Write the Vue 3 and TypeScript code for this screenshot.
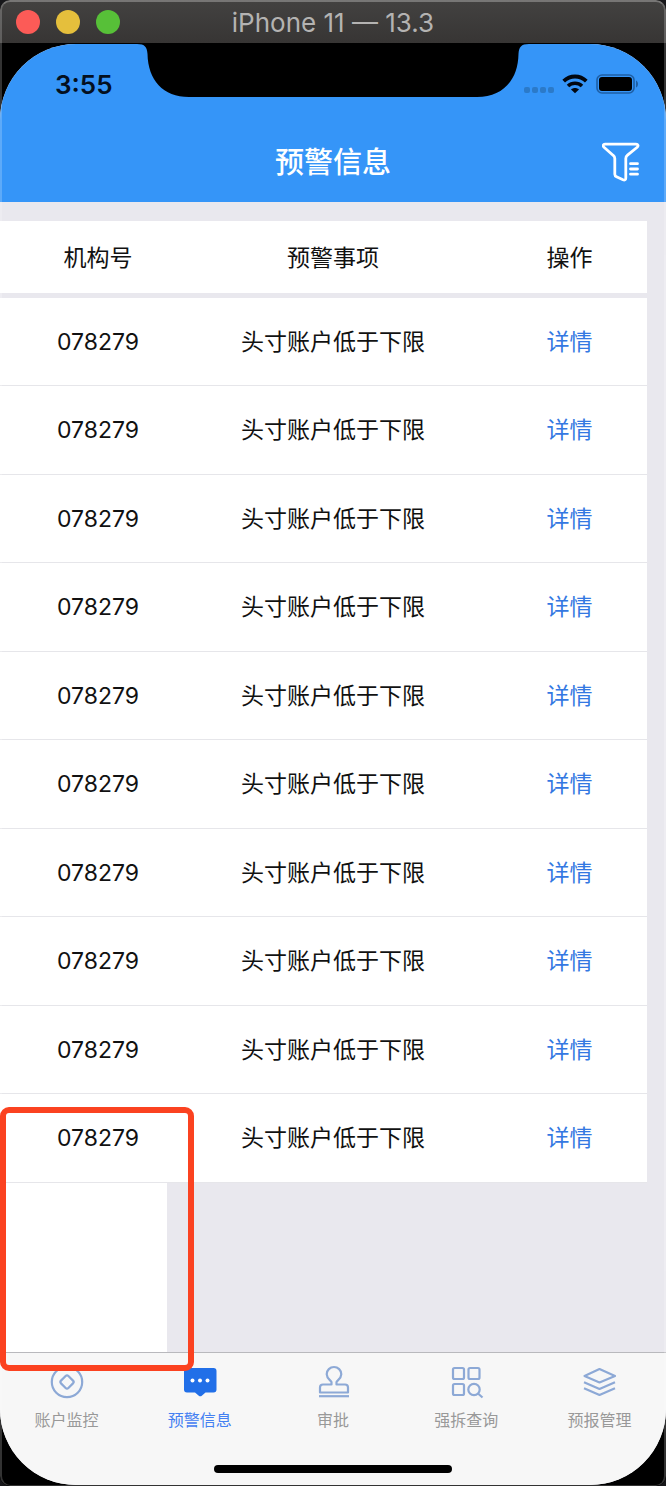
<script setup lang="ts">
import { ref } from 'vue'

interface Alert {
  id: number
  org: string
  item: string
}

type IconName = 'account' | 'alert' | 'stamp' | 'query' | 'layers'

interface Tab {
  label: string
  icon: IconName
}

const alerts: Alert[] = Array.from({ length: 10 }, (_, i) => ({
  id: i + 1,
  org: '078279',
  item: '头寸账户低于下限',
}))

const tabs: Tab[] = [
  { label: '账户监控', icon: 'account' },
  { label: '预警信息', icon: 'alert' },
  { label: '审批', icon: 'stamp' },
  { label: '强拆查询', icon: 'query' },
  { label: '预报管理', icon: 'layers' },
]

const activeTab = ref('预警信息')
</script>

<template>
  <div class="window">
    <div class="titlebar">
      <div class="lights">
        <button class="light close" type="button" aria-label="Close"></button>
        <button class="light minimize" type="button" aria-label="Minimize"></button>
        <button class="light zoom" type="button" aria-label="Zoom"></button>
      </div>
      <div class="window-title">iPhone 11 — 13.3</div>
    </div>

    <div class="bezel">
      <div class="screen">
        <header class="header">
          <svg class="notch" viewBox="0 0 392 53" width="392" height="53" aria-hidden="true">
            <path d="M0 0C8 0 10 3 10.500 10C11 36 26 53 52 53H340C366 53 381 36 381.500 10C382 3 384 0 392 0Z" />
          </svg>
          <div class="status">
            <span class="time">3:55</span>
            <div class="status-icons">
              <span class="dots"><i></i><i></i><i></i><i></i></span>
              <svg width="26" height="20" viewBox="0 0 26 20" aria-hidden="true">
                <path d="M1.700 7.200C8.200 .9 17.800 .9 24.300 7.200" fill="none" stroke="#020710" stroke-width="3.800" />
                <path d="M6 12C10 8.300 16 8.300 20 12" fill="none" stroke="#020710" stroke-width="3.600" />
                <path d="M13 19.200L9 15.400C11.200 13.400 14.800 13.400 17 15.400Z" fill="#020710" />
              </svg>
              <svg width="43" height="20" viewBox="0 0 43 20" aria-hidden="true">
                <rect x="1" y="1" width="37" height="18" rx="5" fill="none" stroke="#1e5fa5" stroke-width="1.600" />
                <rect x="3" y="3" width="33" height="14" rx="3" fill="#000" />
                <path d="M40 6.500C42.700 7.500 42.700 12.500 40 13.500Z" fill="#1e5fa5" />
              </svg>
            </div>
          </div>
          <div class="navbar">
            <h1>预警信息</h1>
            <button class="filter" type="button" aria-label="筛选">
              <svg width="38" height="40" viewBox="0 0 38 40" fill="none" stroke="#fff" stroke-width="2.800" stroke-linecap="round" stroke-linejoin="round" aria-hidden="true">
                <path d="M3 2.200H34C36.200 2.200 36.600 4 35.200 5.200L25.500 13.200C24 14.400 23.800 15 23.800 16.500V36C23.800 38 22.500 38.400 21 37.800L14.500 34.800C13.200 34.200 12.800 33.500 12.800 32.300V16.500C12.800 15 12.500 14.400 11 13.200L2 5.200C.7 4 1 2.200 3 2.200Z" />
                <path d="M28.500 21.700H35.500M28.500 27H35.500M28.500 32.200H35.500" />
              </svg>
            </button>
          </div>
        </header>

        <main class="content">
          <table class="alerts">
            <thead>
              <tr>
                <th scope="col">机构号</th>
                <th scope="col">预警事项</th>
                <th scope="col">操作</th>
              </tr>
            </thead>
            <tbody>
              <tr v-for="row in alerts" :key="row.id">
                <td>{{ row.org }}</td>
                <td>{{ row.item }}</td>
                <td><a href="#detail">详情</a></td>
              </tr>
            </tbody>
          </table>
          <div class="filler"></div>
          <div class="highlight"></div>
        </main>

        <footer class="footer">
          <nav class="tabs">
            <a
              v-for="tab in tabs"
              :key="tab.label"
              href="#tab"
              class="tab"
              :class="{ active: tab.label === activeTab }"
              @click.prevent="activeTab = tab.label"
            >
              <svg class="tab-icon" width="36" height="34" viewBox="0 0 36 34" fill="none" stroke="currentColor" stroke-width="2.200" stroke-linejoin="round" aria-hidden="true">
                <template v-if="tab.icon === 'account'">
                  <circle cx="18" cy="17" r="15.200" />
                  <path d="M16.600 11Q18 9.600 19.400 11L24 15.600Q25.400 17 24 18.400L19.400 23Q18 24.400 16.600 23L12 18.400Q10.600 17 12 15.600Z" />
                </template>
                <template v-else-if="tab.icon === 'alert'">
                  <path d="M5 3H31.500Q34.500 3 34.500 6V24.500Q34.500 27.500 31.500 27.500H23.500L19.800 30.700Q18.300 31.900 16.800 30.700L13 27.500H5Q2 27.500 2 24.500V6Q2 3 5 3Z" fill="currentColor" stroke="none" />
                  <g fill="#fff" stroke="none">
                    <circle cx="10.500" cy="15.500" r="2" />
                    <circle cx="18" cy="15.500" r="2" />
                    <circle cx="25.500" cy="15.500" r="2" />
                  </g>
                </template>
                <template v-else-if="tab.icon === 'stamp'">
                  <path d="M16.500 19.500V17C16 15.500 11.700 13.700 11.700 9.300A7.300 7.300 0 0 1 26.300 9.300C26.300 13.700 22 15.500 21.500 17V19.500H30Q33 19.500 33 22.500V27.500H5V22.500Q5 19.500 8 19.500Z" />
                  <path d="M4 31.200H34" />
                </template>
                <template v-else-if="tab.icon === 'query'">
                  <rect x="5" y="3" width="11" height="11" rx="1.500" />
                  <rect x="20.500" y="3" width="11" height="11" rx="1.500" />
                  <rect x="5" y="19" width="11" height="11" rx="1.500" />
                  <circle cx="26" cy="24.500" r="5.700" />
                  <path d="M30 28.500L34.500 32.500" />
                </template>
                <template v-else>
                  <path d="M18.500 4L34 11L18.500 17.500L3.500 11Z" />
                  <path d="M3 17.200L18.500 24L34 17.200M3 23.200L18.500 30L34 23.200" />
                </template>
              </svg>
              <span>{{ tab.label }}</span>
            </a>
          </nav>
          <div class="home-indicator"></div>
        </footer>
      </div>
    </div>
  </div>
</template>

<style>
body {
  background: #17171a;
}
</style>

<style scoped>
.window {
  position: relative;
  display: flex;
  flex-direction: column;
  box-sizing: border-box;
  min-height: 100vh;
  overflow: hidden;
  border-radius: 10px;
  background: #000;
  font-family: Inter, "Noto Sans CJK SC", sans-serif;
  color: #111;
}

.window::after {
  content: "";
  position: absolute;
  inset: 0;
  border: 2px solid rgba(255, 255, 255, 0.2);
  border-top-color: rgba(255, 255, 255, 0.28);
  border-bottom-width: 1px;
  border-radius: 10px;
  pointer-events: none;
}

.titlebar {
  position: relative;
  display: flex;
  align-items: center;
  justify-content: center;
  box-sizing: border-box;
  height: 43px;
  background: linear-gradient(#434241, #373534);
}

.lights {
  position: absolute;
  left: 16px;
  top: 10px;
  display: flex;
  gap: 16px;
}

.light {
  width: 24px;
  height: 24px;
  padding: 0;
  border: 0;
  border-radius: 50%;
}

.close {
  background: #fc5b57;
}

.minimize {
  background: #e5bf3c;
}

.zoom {
  background: #57c038;
}

.window-title {
  font-size: 26px;
  line-height: 42px;
  padding-top: 2px;
  color: #b4b3b2;
}

.bezel {
  display: flex;
  flex: 1;
  padding: 1px 0;
  background: #000;
}

.screen {
  display: flex;
  flex: 1;
  flex-direction: column;
  overflow: hidden;
  border-radius: 76px;
  background: #e9e8ee;
}

.header {
  position: relative;
  background: #3595f8;
}

.notch {
  position: absolute;
  top: 0;
  left: 50%;
  transform: translateX(-50%);
}

.status {
  display: flex;
  align-items: center;
  justify-content: space-between;
  height: 80px;
  padding: 0 27px 0 55px;
}

.time {
  font-size: 26px;
  font-weight: 600;
  color: #04101f;
}

.status-icons {
  display: flex;
  align-items: center;
  gap: 8px;
}

.dots {
  display: flex;
  gap: 2px;
  padding-top: 12px;
}

.dots i {
  width: 6px;
  height: 6px;
  border-radius: 2px;
  background: #2b7ac9;
}

.navbar {
  position: relative;
  display: flex;
  align-items: center;
  justify-content: center;
  height: 78px;
}

h1 {
  margin: 0;
  font-size: 29px;
  font-weight: 500;
  line-height: 40px;
  color: #fff;
}

.filter {
  position: absolute;
  right: 26px;
  top: 18px;
  display: flex;
  padding: 0;
  border: 0;
  background: none;
}

.content {
  position: relative;
  display: flex;
  flex: 1;
  flex-direction: column;
  padding-top: 19px;
}

.alerts {
  width: calc(100% - 19px);
  border-collapse: separate;
  border-spacing: 0;
  table-layout: fixed;
  background: #fff;
  font-size: 23px;
  line-height: 32px;
}

th,
td {
  box-sizing: border-box;
  padding: 0;
  font-weight: 400;
  text-align: center;
}

th {
  height: 77px;
  padding-top: 2px;
  border-bottom: 5px solid #e9e8ee;
}

th:nth-child(1) {
  width: 196px;
}

th:nth-child(3) {
  width: 177px;
}

td {
  height: 88px;
  border-bottom: 1px solid #e6e6ea;
}

tr:nth-child(even) td {
  height: 89px;
}

th:last-child,
td:last-child {
  padding-left: 22px;
}

td a {
  color: #3478e2;
  text-decoration: none;
}

.filler {
  flex: 1;
  width: 25%;
  background: #fff;
}

.highlight {
  position: absolute;
  left: 0;
  bottom: -19px;
  z-index: 1;
  box-sizing: border-box;
  width: 194px;
  height: 264px;
  border: 6px solid #fb4220;
  border-radius: 9px;
}

.footer {
  display: flex;
  flex-direction: column;
  align-items: center;
  justify-content: space-between;
  box-sizing: border-box;
  height: 133px;
  padding: 12px 0;
  border-top: 1px solid #b9b9bd;
  background: #f7f7f7;
}

.tabs {
  display: grid;
  grid-template-columns: repeat(5, 1fr);
  width: 100%;
}

.tab {
  display: flex;
  flex-direction: column;
  align-items: center;
  gap: 9px;
  font-size: 16px;
  line-height: 24px;
  color: #999;
  text-decoration: none;
}

.tab-icon {
  color: #8da9d6;
}

.tab.active {
  color: #4480f2;
}

.tab.active .tab-icon {
  color: #216fe8;
}

.home-indicator {
  width: 238px;
  height: 8px;
  border-radius: 4px;
  background: #000;
}
</style>
